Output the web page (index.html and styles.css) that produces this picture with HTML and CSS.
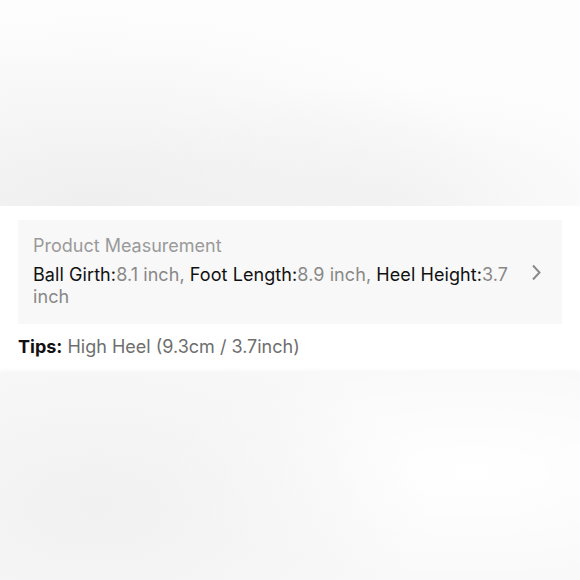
FILE: index.html
```html
<!DOCTYPE html>
<html>
<head>
<meta charset="utf-8">
<link rel="stylesheet" href="styles.css">
</head>
<body>
<div class="page">
  <div class="photo photo-top"></div>
  <section class="details">
    <div class="measure">
      <div class="measure-text">
        <div class="measure-title">Product Measurement</div>
        <div class="measure-values"><span class="key">Ball Girth:</span><span class="val">8.1 inch, </span><span class="key">Foot Length:</span><span class="val">8.9 inch, </span><span class="key">Heel Height:</span><span class="val">3.7 inch</span></div>
      </div>
      <svg class="chev" width="11" height="17" viewBox="0 0 11 17"><path d="M2 1.5 L8.5 8.5 L2 15.5" fill="none" stroke="#8a8a8a" stroke-width="2"/></svg>
    </div>
    <div class="tips"><span class="tips-key">Tips:</span> High Heel (9.3cm / 3.7inch)</div>
  </section>
  <div class="photo photo-bottom"></div>
</div>
</body>
</html>
```
FILE: styles.css
```css
html, body { margin: 0; padding: 0; background: #fff; }
.page { width: 580px; height: 580px; overflow: hidden; display: flex; flex-direction: column; font-family: Inter, "Liberation Sans", Arial, sans-serif; }
.photo-top {
  height: 206px; flex: none;
  background:
    radial-gradient(ellipse 420px 200px at 90px 215px, #eeeeee 0%, rgba(240,240,240,0) 100%),
    radial-gradient(ellipse 300px 120px at 380px 205px, #f3f3f3 0%, rgba(243,243,243,0) 100%),
    #fdfdfd;
}
.details { padding: 14px 18px 14px; flex: none; height: 166px; box-sizing: border-box; }
.measure { background: #f8f8f8; display: flex; align-items: flex-start; padding: 15px 20px 16px 15px; height: 104px; box-sizing: border-box; }
.measure-text { flex: 1; padding-right: 14px; }
.measure-title { color: #9a9a9a; font-size: 18px; line-height: 22px; margin-bottom: 7px; }
.measure-values { font-size: 18px; line-height: 22px; color: #111; letter-spacing: 0.08px; }
.val { color: #888; }
.chev { flex: none; margin-top: 29px; }
.tips { margin-top: 12px; font-size: 18px; line-height: 22px; color: #6e6e6e; }
.tips-key { color: #111; font-weight: bold; }
.photo-bottom {
  flex: 1;
  box-shadow: 0 -2px 4px rgba(0,0,0,0.03);
  background:
    radial-gradient(ellipse 330px 190px at 95px 135px, #f1f1f1 0%, rgba(242,242,242,0) 100%),
    radial-gradient(ellipse 320px 110px at 470px 100px, #ffffff 0%, rgba(255,255,255,0) 100%),
    #f9f9f9;
}
```
